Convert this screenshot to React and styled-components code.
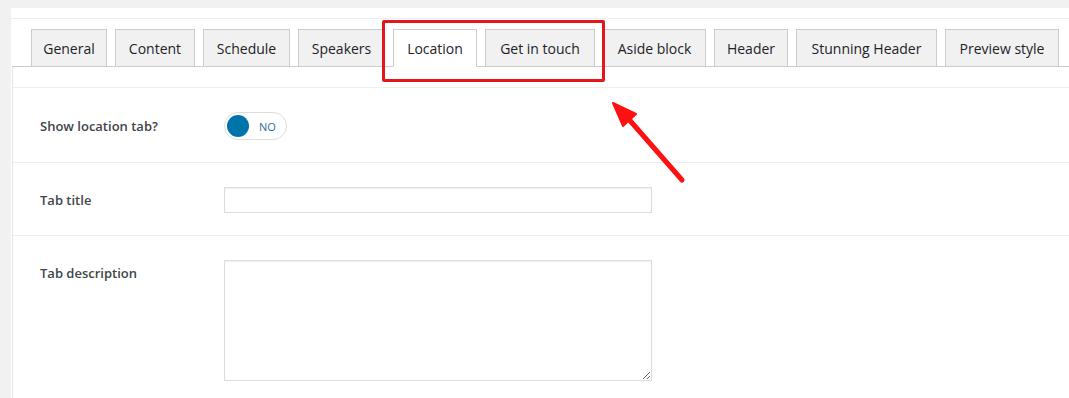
import React from 'react';
import styled, { createGlobalStyle } from 'styled-components';

const GlobalStyle = createGlobalStyle`
  html, body {
    margin: 0;
    padding: 0;
    background: #f1f1f1;
    font-family: "Open Sans", "Noto Sans", sans-serif;
    color: #23282d;
  }
`;

const Page = styled.div`
  position: relative;
  width: 1069px;
  height: 398px;
  overflow: hidden;
  padding: 8px 0 0 11px;
  box-sizing: border-box;
`;

const Panel = styled.div`
  background: #fff;
  height: 100%;
`;

const TopStrip = styled.div`
  height: 10px;
  border-bottom: 1px solid #eee;
`;

const TabBar = styled.nav`
  display: flex;
  gap: 8px;
  margin-top: 10px;
  margin-left: 1px;
  padding-left: 19px;
  border-bottom: 1px solid #ccc;
  height: 37px;
  align-items: flex-end;
`;

const Tab = styled.div`
  box-sizing: border-box;
  flex: none;
  width: ${p => p.$w}px;
  height: ${p => (p.$active ? '38px' : '37px')};
  margin-bottom: ${p => (p.$active ? '-1px' : '0')};
  display: flex;
  align-items: center;
  justify-content: center;
  font-size: 14px;
  font-weight: 500;
  color: #1d2327;
  background: ${p => (p.$active ? '#fff' : '#f1f1f1')};
  border: 1px solid #ccc;
  border-bottom: ${p => (p.$active ? '1px solid #fff' : '0')};
  white-space: nowrap;
`;

const Content = styled.div`
  margin-left: 1px;
  border-left: 1px solid #e5e5e5;
  height: 100%;
`;

const Spacer = styled.div`
  height: 20px;
  border-bottom: 1px solid #eee;
`;

const Row = styled.div`
  display: flex;
  align-items: flex-start;
  padding: 24px 0 22px 27px;
  border-bottom: ${p => (p.$last ? '0' : '1px solid #eee')};
`;

const Label = styled.div`
  width: 184px;
  flex: none;
  font-size: 13px;
  font-weight: 600;
  line-height: ${p => p.$lh || 26}px;
  color: #40464b;
`;

const Toggle = styled.div`
  box-sizing: border-box;
  width: 63px;
  height: 28px;
  border: 1px solid #ddd;
  border-radius: 14px;
  display: flex;
  align-items: center;
  padding-left: 2px;
  gap: 10px;
`;

const Knob = styled.span`
  width: 22px;
  height: 22px;
  border-radius: 50%;
  background: #0073aa;
`;

const ToggleText = styled.span`
  font-size: 11px;
  color: #2a6f97;
`;

const TextInput = styled.input`
  box-sizing: border-box;
  width: 428px;
  height: 26px;
  border: 1px solid #ddd;
  box-shadow: inset 0 1px 2px rgba(0, 0, 0, 0.07);
  margin: 0;
  padding: 0 6px;
  outline: none;
`;

const TextArea = styled.textarea`
  box-sizing: border-box;
  width: 428px;
  height: 121px;
  border: 1px solid #ddd;
  box-shadow: inset 0 1px 2px rgba(0, 0, 0, 0.07);
  margin: 0;
  padding: 6px;
  outline: none;
  display: block;
`;

const Highlight = styled.div`
  position: absolute;
  left: 382px;
  top: 20px;
  width: 223px;
  height: 62px;
  box-sizing: border-box;
  border: 3px solid #e3161c;
  border-radius: 2px;
  pointer-events: none;
`;

const ArrowSvg = styled.svg`
  position: absolute;
  left: 600px;
  top: 90px;
  pointer-events: none;
`;

const tabs = [
  { name: 'General', w: 76 },
  { name: 'Content', w: 80 },
  { name: 'Schedule', w: 87 },
  { name: 'Speakers', w: 87 },
  { name: 'Location', w: 84, active: true },
  { name: 'Get in touch', w: 110 },
  { name: 'Aside block', w: 103 },
  { name: 'Header', w: 74 },
  { name: 'Stunning Header', w: 141 },
  { name: 'Preview style', w: 114 },
];

export default function App() {
  return (
    <>
      <GlobalStyle />
      <Page>
        <Panel>
          <TopStrip />
          <TabBar>
            {tabs.map(t => (
              <Tab key={t.name} $w={t.w} $active={t.active}>{t.name}</Tab>
            ))}
          </TabBar>
          <Content>
            <Spacer />
            <Row>
              <Label $lh={28}>Show location tab?</Label>
              <Toggle>
                <Knob />
                <ToggleText>NO</ToggleText>
              </Toggle>
            </Row>
            <Row>
              <Label>Tab title</Label>
              <TextInput type="text" />
            </Row>
            <Row $last>
              <Label>Tab description</Label>
              <TextArea />
            </Row>
          </Content>
        </Panel>
        <Highlight />
        <ArrowSvg width="100" height="110" viewBox="0 0 100 110">
          <line x1="82" y1="90" x2="26" y2="26" stroke="#f11" strokeWidth="5" strokeLinecap="round" />
          <polygon points="13,13 36,24 23,36" fill="#f11" stroke="#f11" strokeWidth="2" strokeLinejoin="round" />
        </ArrowSvg>
      </Page>
    </>
  );
}
